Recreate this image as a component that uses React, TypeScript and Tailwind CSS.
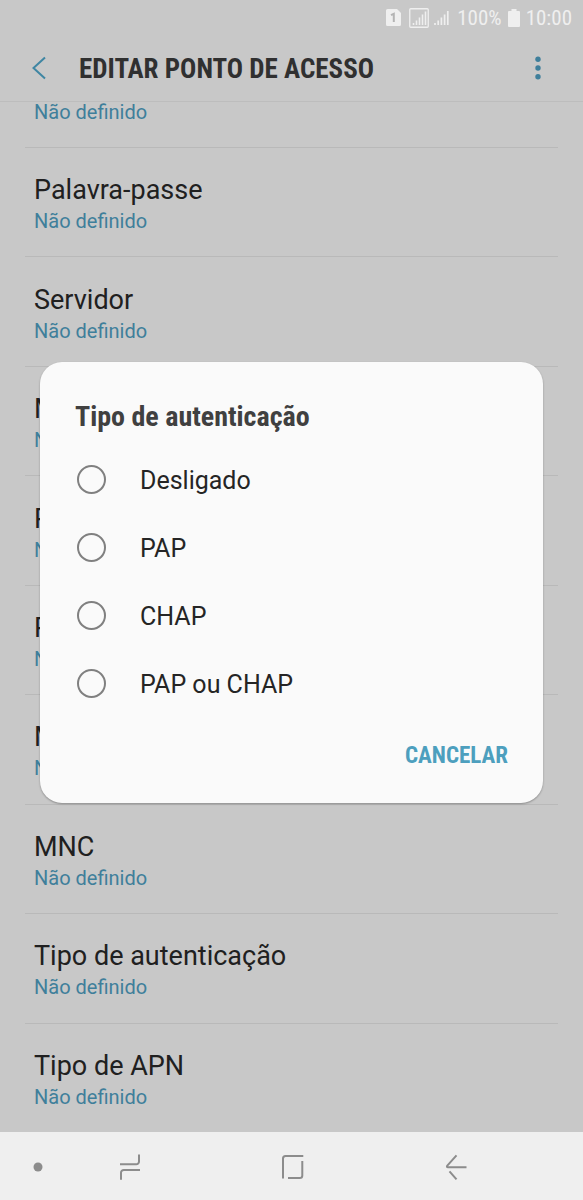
import React, { useState } from "react";

const UNSET = "Não definido";

const settings = [
  "Palavra-passe",
  "Servidor",
  "MMSC",
  "Proxy multimédia",
  "Porta multimédia",
  "MCC",
  "MNC",
  "Tipo de autenticação",
  "Tipo de APN",
];

const options = ["Desligado", "PAP", "CHAP", "PAP ou CHAP"];

const condensed = "font-['Roboto_Condensed','Roboto',sans-serif]";

function StatusBar() {
  return (
    <div
      className={`flex h-[35px] items-center justify-end pr-[11px] text-[21px] leading-6 text-[#efefef] ${condensed}`}
    >
      <svg width="15" height="17" viewBox="0 0 15 17" className="mr-2" aria-hidden="true">
        <path d="M1.5 0H11l4 4v11.5a1.5 1.5 0 0 1-1.5 1.5h-12A1.5 1.5 0 0 1 0 15.500V1.500A1.500 1.500 0 0 1 1.500 0Z" fill="currentColor" />
        <path d="M5 6.200 7.800 4.800V13" fill="none" stroke="#b4b4b4" strokeWidth="2" />
      </svg>
      <svg width="20" height="20" viewBox="0 0 20 20" className="mr-[5px]" aria-hidden="true">
        <rect x="0.750" y="0.750" width="18.500" height="18.500" rx="1" fill="none" stroke="currentColor" strokeWidth="1.300" />
        <path d="M4.500 17v-2M7.500 17v-4.500M10.500 17V9.500M13.500 17V6.500M16.500 17V3.500" stroke="currentColor" strokeWidth="1.600" />
      </svg>
      <svg width="15" height="15" viewBox="0 0 15 15" className="mr-2" aria-hidden="true">
        <path d="M1 15v-2M4.200 15v-4.500M7.400 15V7.500M10.600 15V4.500M13.800 15V1" stroke="currentColor" strokeWidth="1.700" />
      </svg>
      <span>100%</span>
      <svg width="12" height="18" viewBox="0 0 12 18" className="mx-[6px]" aria-hidden="true">
        <path d="M3.500 0h5v2H11a1 1 0 0 1 1 1v14a1 1 0 0 1-1 1H1a1 1 0 0 1-1-1V3a1 1 0 0 1 1-1h2.500Z" fill="currentColor" />
      </svg>
      <span>10:00</span>
    </div>
  );
}

function Header() {
  return (
    <header className="flex h-[67px] items-center border-b border-[#bdbdbd] pl-[30px] pr-[34px]">
      <button type="button" aria-label="Voltar" className="text-[#3f86a3]">
        <svg width="18" height="24" viewBox="0 0 18 24" fill="none" stroke="currentColor" strokeWidth="2">
          <path d="M15 1.500 3.500 12 15 22.500" />
        </svg>
      </button>
      <h1 className={`ml-[31px] flex-1 pt-[2px] text-[27px] font-bold leading-8 text-[#303030] ${condensed}`}>
        EDITAR PONTO DE ACESSO
      </h1>
      <button type="button" aria-label="Mais opções" className="text-[#3f7f9b]">
        <svg width="22" height="24" viewBox="0 0 22 24" fill="currentColor">
          <circle cx="11" cy="3.300" r="2.700" />
          <circle cx="11" cy="12" r="2.700" />
          <circle cx="11" cy="20.700" r="2.700" />
        </svg>
      </button>
    </header>
  );
}

function SettingsList() {
  return (
    <main className="flex flex-1 flex-col px-[25px]">
      <p className="h-[45px] px-[9px] text-[20px] leading-5 text-[#3f7f9b]">{UNSET}</p>
      <ul className="grid flex-1 auto-rows-fr">
        {settings.map((name) => (
          <li key={name} className="flex flex-col justify-center gap-px border-t border-[#b9b9b9] px-[9px] pt-[5px]">
            <span className="text-[27px] leading-8 text-[#202020]">{name}</span>
            <span className="text-[20px] leading-7 text-[#3f7f9b]">{UNSET}</span>
          </li>
        ))}
      </ul>
    </main>
  );
}

function AuthDialog() {
  const [selected, setSelected] = useState("");
  return (
    <div
      role="dialog"
      aria-labelledby="auth-title"
      className="mx-10 w-full rounded-[22px] bg-[#fafafa] px-[35px] pb-[29px] pt-[39px] shadow-[0_1px_2px_rgba(0,0,0,0.3)]"
    >
      <h2 id="auth-title" className={`text-[28px] font-bold leading-8 text-[#404040] ${condensed}`}>
        Tipo de autenticação
      </h2>
      <div role="radiogroup" aria-labelledby="auth-title" className="mt-3">
        {options.map((name) => (
          <label key={name} className="flex h-[68px] items-center gap-[34px] pl-[2px] text-[25px] leading-8 text-[#252525]">
            <input
              type="radio"
              name="auth"
              checked={selected === name}
              onChange={() => setSelected(name)}
              className="size-[29px] shrink-0 appearance-none rounded-full border-2 border-[#808080] checked:border-[9px] checked:border-[#4d9fbe]"
            />
            <span className="pt-1">{name}</span>
          </label>
        ))}
      </div>
      <div className="mt-[21px] flex justify-end">
        <button type="button" className={`text-[23px] font-bold leading-9 text-[#4d9fbe] ${condensed}`}>
          CANCELAR
        </button>
      </div>
    </div>
  );
}

function NavigationBar() {
  return (
    <nav className="flex h-[68px] items-center bg-[#efefef] pb-px pt-[2px] text-[#8c8c8c]">
      <div className="flex flex-[75] justify-center">
        <button type="button" aria-label="Ocultar barra">
          <svg width="10" height="10" viewBox="0 0 10 10">
            <circle cx="5" cy="5" r="4.500" fill="currentColor" />
          </svg>
        </button>
      </div>
      <div className="flex flex-[109] justify-center">
        <button type="button" aria-label="Recentes">
          <svg width="24" height="28" viewBox="0 0 24 28" fill="none" stroke="currentColor" strokeWidth="2">
            <path d="M2 11.300h16.200a2.800 2.800 0 0 0 2.800-2.800V1.500M22 17H5.800A2.800 2.800 0 0 0 3 19.800v7" />
          </svg>
        </button>
      </div>
      <div className="flex flex-[217] justify-center">
        <button type="button" aria-label="Início">
          <svg width="24" height="26" viewBox="0 0 24 26" fill="none" stroke="currentColor" strokeWidth="2">
            <path d="M22.300 2H4.500A2.500 2.500 0 0 0 2 4.500v20M21.300 7v14.500a2.500 2.500 0 0 1-2.500 2.500H7" />
          </svg>
        </button>
      </div>
      <div className="flex flex-[109] justify-center">
        <button type="button" aria-label="Retroceder">
          <svg width="24" height="26" viewBox="0 0 24 26" fill="none" stroke="currentColor" strokeWidth="2">
            <path d="M12.500 1.300 3.300 11.600Q2.300 13.200 4 13.200H22.500M5.500 17.300l7 8" strokeLinejoin="round" />
          </svg>
        </button>
      </div>
      <div className="flex-[73]" />
    </nav>
  );
}

export default function App() {
  return (
    <div className="flex min-h-screen flex-col bg-[#c8c8c8] font-['Roboto',sans-serif]">
      <StatusBar />
      <div className="relative flex flex-1 flex-col">
        <Header />
        <SettingsList />
        <div className="absolute inset-0 flex items-center justify-center pb-[2px]">
          <AuthDialog />
        </div>
      </div>
      <NavigationBar />
    </div>
  );
}
